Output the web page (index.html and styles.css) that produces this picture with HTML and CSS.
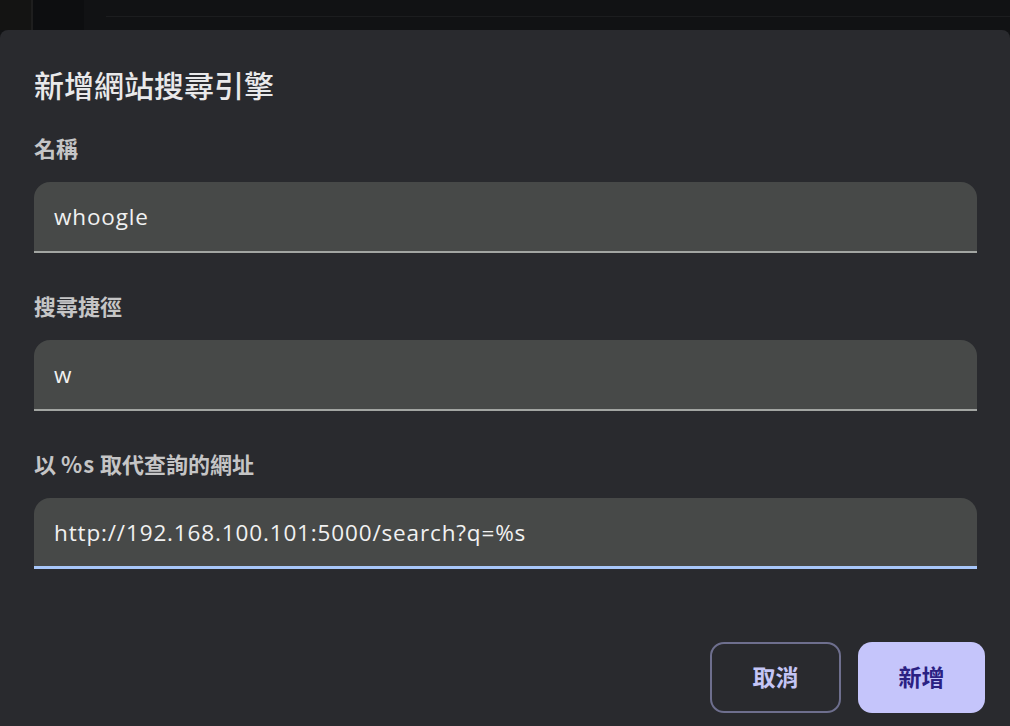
FILE: index.html
```html
<!DOCTYPE html>
<html lang="zh-Hant">
<head>
<meta charset="utf-8">
<link rel="stylesheet" href="styles.css">
</head>
<body>
<div class="backdrop">
  <div class="bd-left"></div>
  <div class="bd-mid"></div>
  <div class="bd-main"><div class="bd-line"></div></div>
</div>
<div class="dialog">
  <h1 class="title">新增網站搜尋引擎</h1>
  <div class="field">
    <label class="label">名稱</label>
    <div class="input"><span class="value">whoogle</span></div>
  </div>
  <div class="field">
    <label class="label">搜尋捷徑</label>
    <div class="input"><span class="value">w</span></div>
  </div>
  <div class="field">
    <label class="label">以 <span class="latin">%s</span> 取代查詢的網址</label>
    <div class="input focused"><span class="value">http://192.168.100.101:5000/search?q=%s</span></div>
  </div>
  <div class="actions">
    <button class="btn btn-cancel">取消</button>
    <button class="btn btn-add">新增</button>
  </div>
</div>
</body>
</html>
```
FILE: styles.css
```css
html, body {
  margin: 0;
  padding: 0;
  background: #111214;
  width: 1010px;
  height: 726px;
  overflow: hidden;
}
body {
  font-family: "Noto Sans CJK TC", "Noto Sans", sans-serif;
}
.backdrop {
  height: 30px;
  display: flex;
}
.bd-left {
  width: 31px;
  background: #141413;
  border-right: 2px solid #1e1e1e;
}
.bd-mid {
  width: 51px;
  background: #0d0e10;
}
.bd-main {
  flex: 1;
  background: #111214;
  padding-top: 16px;
  padding-left: 22px;
}
.bd-line {
  height: 1px;
  background: #1c1d1f;
}
.dialog {
  background: #292a2e;
  border-radius: 8px 8px 0 0;
  height: 696px;
  padding: 34px 33px 0 34px;
  box-sizing: border-box;
}
.title {
  margin: 0 0 28px;
  font-size: 30px;
  line-height: 40px;
  font-weight: 500;
  color: #e9e9ea;
}
.field {
  display: flex;
  flex-direction: column;
  margin-bottom: 37px;
}
.label {
  font-size: 22px;
  line-height: 30px;
  font-weight: 700;
  color: #c5c5c6;
  margin-bottom: 20px;
}
.latin {
  letter-spacing: 1px;
}
.input {
  height: 71px;
  box-sizing: border-box;
  background: #474948;
  border-radius: 16px 16px 0 0;
  border-bottom: 2px solid #a2a5a2;
  display: flex;
  align-items: center;
  padding: 0 20px 0;
}
.input.focused {
  border-bottom: 3px solid #a8c7fa;
  padding-top: 1px;
}
.value {
  font-family: "Open Sans", "Noto Sans", sans-serif;
  font-size: 22.5px;
  letter-spacing: 0.85px;
  color: #f1f1f1;
}
.actions {
  display: flex;
  justify-content: flex-end;
  gap: 17px;
  margin-top: 73px;
  margin-right: -8px;
}
.btn {
  height: 71px;
  border-radius: 14px;
  font-family: "Noto Sans CJK TC", sans-serif;
  font-size: 23px;
  font-weight: 700;
  padding: 0 0 3px;
  box-sizing: border-box;
}
.btn-cancel {
  width: 131px;
  background: transparent;
  border: 2px solid #6e6f8e;
  color: #c4c5f6;
}
.btn-add {
  width: 127px;
  background: #c5c5fb;
  border: none;
  color: #2b2183;
}
```
